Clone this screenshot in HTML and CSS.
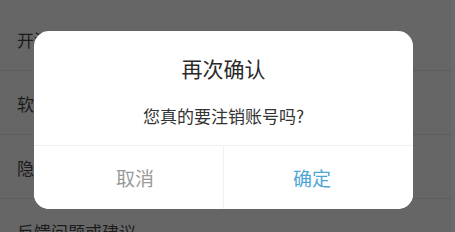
FILE: index.html
```html
<!DOCTYPE html>
<html lang="zh-CN">
<head>
<meta charset="UTF-8">
<meta name="viewport" content="width=device-width, initial-scale=1.0">
<title>再次确认</title>
<link rel="stylesheet" href="styles.css">
</head>
<body>

<div class="page">
  <ul class="menu">
    <li class="menu-item">开源许可</li>
    <li class="menu-item">软件许可协议</li>
    <li class="menu-item">隐私政策</li>
    <li class="menu-item">反馈问题或建议</li>
  </ul>
  <div class="scroll-strip"></div>
</div>

<!-- 确认弹窗 -->
<div class="dialog">
  <div class="dialog-body">
    <h2 class="dialog-title">再次确认</h2>
    <p class="dialog-text">您真的要注销账号吗?</p>
  </div>
  <div class="dialog-actions">
    <button class="btn btn-cancel">取消</button>
    <button class="btn btn-ok">确定</button>
  </div>
</div>

</body>
</html>
```

FILE: styles.css
```css
html, body {
  margin: 0;
  padding: 0;
  height: 100%;
  overflow: hidden;
}

body {
  background: #666;
  font-family: "Noto Sans CJK SC", "Noto Sans", sans-serif;
}

.page {
  display: flex;
  height: 100%;
}

.menu {
  flex: 1;
  list-style: none;
  margin: 0;
  padding: 7px 0 0 0;
}

.menu-item {
  height: 63px;
  line-height: 66px;
  padding-left: 17px;
  font-size: 17px;
  color: #1c1c1c;
  border-bottom: 1px solid #5e5e5e;
}

.scroll-strip {
  width: 4px;
  background: #6a6a6a;
}

.dialog {
  position: absolute;
  left: 34px;
  top: 31px;
  width: 379px;
  height: 178px;
  background: #fff;
  border-radius: 15px;
  overflow: hidden;
  display: flex;
  flex-direction: column;
}

.dialog-body {
  height: 115px;
  padding-top: 24px;
  box-sizing: border-box;
  text-align: center;
  border-bottom: 1px solid #f0f0f0;
}

.dialog-title {
  margin: 0;
  font-size: 21px;
  font-weight: normal;
  line-height: 26px;
  color: #2a2a2a;
}

.dialog-text {
  margin: 23px 0 0 0;
  font-size: 17px;
  line-height: 24px;
  color: #333;
}

.dialog-actions {
  flex: 1;
  display: flex;
}

.btn {
  flex: 1;
  border: none;
  background: #fff;
  font-family: inherit;
  font-size: 19px;
  padding: 0;
  cursor: pointer;
}

.btn-cancel {
  color: #9a9a9a;
  padding-left: 13px;
  border-right: 1px solid #f0f0f0;
}

.btn-ok {
  color: #4ea6d6;
  padding-right: 13px;
}
```
